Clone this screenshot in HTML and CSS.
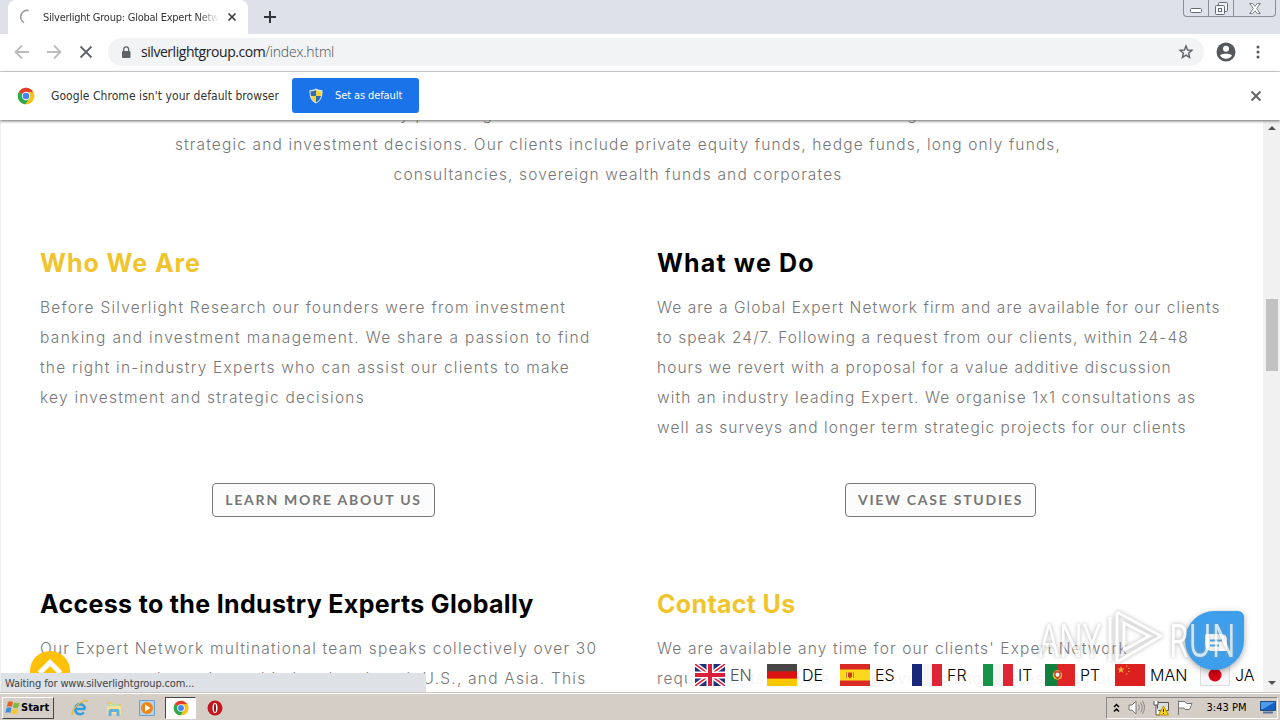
FILE: index.html
```html
<!DOCTYPE html>
<html lang="en">
<head>
    <meta charset="UTF-8">
    <title>Silverlight Group: Global Expert Network</title>
    <link rel="stylesheet" href="styles.css">
</head>
<body>
    <svg class="defs" width="0" height="0">
        <symbol id="chrome" viewBox="0 0 24 24">
            <circle cx="12" cy="12" r="11" fill="#fbc116"/>
            <path d="M12 12 2.5 6.5A11 11 0 0 1 21.5 6.5H12z" fill="#e33b2e"/>
            <path d="M2.5 6.5A11 11 0 0 0 11.5 23L16.8 14.5 12 12z" fill="#2da94f"/>
            <path d="M21.5 6.5A11 11 0 0 1 11.5 23L16.8 14.5 15 6.5z" fill="#fbc116"/>
            <circle cx="12" cy="12" r="5.6" fill="#fff"/>
            <circle cx="12" cy="12" r="4.4" fill="#4285f4"/>
        </symbol>
    </svg>

    <header class="tabstrip">
        <div class="tab">
            <svg class="spinner" width="16" height="16" viewBox="0 0 16 16"><path d="M9.500 1.500A6.500 6.500 0 0 0 5 13.500" fill="none" stroke="#999" stroke-width="1.600"/></svg>
            <span class="tab-title">Silverlight Group: Global Expert Network</span>
            <svg width="10" height="10" viewBox="0 0 10 10"><path d="M1.500 1.500l7 7M8.500 1.500l-7 7" stroke="#3c4043" stroke-width="1.700"/></svg>
        </div>
        <svg class="new-tab" width="14" height="14" viewBox="0 0 14 14"><path d="M7 1v12M1 7h12" stroke="#333639" stroke-width="2"/></svg>
        <div class="window-buttons">
            <span class="min"><svg width="12" height="5" viewBox="0 0 12 5"><rect x=".5" y=".5" width="11" height="4" rx="1" fill="#fff" stroke="#666b78"/></svg></span>
            <span class="restore"><svg width="13" height="13" viewBox="0 0 13 13" fill="#f3f4f6" stroke="#666b78"><rect x="3.500" y=".5" width="9" height="9" rx="1"/><rect x=".5" y="3.500" width="9" height="9" rx="1"/><rect x="3.500" y="6.500" width="3" height="3"/></svg></span>
            <span class="close"><svg width="12" height="11" viewBox="0 0 12 11"><path d="M.7.5h3L6 3.200 8.300.5h3L7.700 5.500l3.600 5h-3L6 7.800l-2.300 2.700h-3l3.600-5z" fill="#fff" stroke="#777c88"/></svg></span>
        </div>
    </header>

    <div class="toolbar">
        <svg class="back" width="16" height="16" viewBox="0 0 16 16"><path d="M15 8H2M8 1.500L1.500 8 8 14.500" fill="none" stroke="#babcbe" stroke-width="1.800"/></svg>
        <svg class="forward" width="16" height="16" viewBox="0 0 16 16"><path d="M1 8h13M8 1.500L14.500 8 8 14.500" fill="none" stroke="#babcbe" stroke-width="1.800"/></svg>
        <svg class="stop" width="14" height="14" viewBox="0 0 14 14"><path d="M1.500 1.500l11 11M12.500 1.500l-11 11" stroke="#5f6368" stroke-width="1.800"/></svg>
        <div class="omnibox">
            <svg width="10" height="13" viewBox="0 0 10 13"><rect x="1" y="5" width="8.500" height="7" rx="1" fill="#5f6368"/><path d="M2.800 5V3.300a2.400 2.400 0 0 1 4.800 0V5" fill="none" stroke="#5f6368" stroke-width="1.300"/></svg>
            <span class="url">silverlightgroup.com<span class="path">/index.html</span></span>
            <svg class="star" width="16" height="16" viewBox="0 0 16 16"><path d="M8 2l1.600 4 4.300.4-3.300 2.800 1 4.300L8 11.200l-3.600 2.300 1-4.300-3.300-2.800 4.300-.4z" fill="none" stroke="#5f6368" stroke-width="1.400"/></svg>
        </div>
        <svg class="profile" width="20" height="20" viewBox="0 0 20 20"><circle cx="10" cy="10" r="9.500" fill="#54585d"/><circle cx="10" cy="6.700" r="3" fill="#fff"/><path d="M4 13.600c1-2.600 11-2.600 12 0-2.800 4.300-9.200 4.300-12 0z" fill="#fff"/></svg>
        <svg class="dots" width="4" height="14" viewBox="0 0 4 14" fill="#54585d"><circle cx="2" cy="2" r="1.500"/><circle cx="2" cy="7" r="1.500"/><circle cx="2" cy="12" r="1.500"/></svg>
    </div>

    <div class="infobar">
        <svg width="18" height="18"><use href="#chrome"/></svg>
        <span class="info-text">Google Chrome isn't your default browser</span>
        <button class="default-btn">
            <svg width="14" height="16" viewBox="0 0 14 16"><path d="M7 .5c2 1.300 4 1.700 6.500 1.700C13.700 9 12 13 7 15.500 2 13 .3 9 .5 2.200 3 2.200 5 1.800 7 .5z" fill="#dfe7ee"/><path d="M7 2v6H2C1.600 6 1.600 5 1.600 3.300 4 3.200 5.500 3 7 2zM7 8h5c-.6 3-2 4.800-5 6.400z" fill="#2d6db5"/><path d="M7 2v6h5c.4-2 .4-3 .4-4.700C10 3.200 8.500 3 7 2zM7 8H2c.6 3 2 4.800 5 6.400z" fill="#f7d33b"/></svg>
            <span>Set as default</span>
        </button>
        <svg class="dismiss" width="12" height="12" viewBox="0 0 12 12"><path d="M1.500 1.500l9 9M10.500 1.500l-9 9" stroke="#63676c" stroke-width="2"/></svg>
    </div>

    <div class="viewport">
        <main class="page">
            <p class="intro">We assist our clients by providing them with access to the best leaders when making their critical<br>strategic and investment decisions. Our clients include private equity funds, hedge funds, long only funds,<br>consultancies, sovereign wealth funds and corporates</p>
            <div class="columns">
                <section class="who">
                    <h2 class="gold">Who We Are</h2>
                    <p>Before Silverlight Research our founders were from investment<br><span class="wide">banking and investment management. We share a passion to find</span><br>the right in-industry Experts who can assist our clients to make<br>key investment and strategic decisions</p>
                    <a class="btn">LEARN MORE ABOUT US</a>
                </section>
                <section class="what">
                    <h2>What we Do</h2>
                    <p>We are a Global Expert Network firm and are available for our clients<br>to speak 24/7. Following a request from our clients, within 24-48<br>hours we revert with a proposal for a value additive discussion<br><span class="wide">with an industry leading Expert. We organise 1x1 consultations as</span><br>well as surveys and longer term strategic projects for our clients</p>
                    <a class="btn">VIEW CASE STUDIES</a>
                </section>
                <section class="access">
                    <h2>Access to the Industry Experts Globally</h2>
                    <p>Our Expert Network multinational team speaks collectively over 30<br>languages and are situated in London, Israel, U.S., and Asia. This</p>
                </section>
                <section class="contact">
                    <h2 class="gold">Contact Us</h2>
                    <p>We are available any time for our clients' Expert Network<br>requirements and we can provide custom rates and hours</p>
                </section>
            </div>
        </main>
        <div class="scrollbar">
            <i class="arrow up"></i>
            <i class="thumb"></i>
            <i class="arrow down"></i>
        </div>

        <div class="to-top"><svg width="40" height="40" viewBox="0 0 40 40"><circle cx="20" cy="20" r="20" fill="#ffc107"/><path d="M9.500 22L20 11.500 30.500 22" fill="none" stroke="#fff" stroke-width="5"/></svg></div>
        <div class="status">Waiting for www.silverlightgroup.com...</div>

        <nav class="languages">
            <span class="lang current"><svg width="30" height="22" viewBox="0 0 30 22"><path d="M0 0h30v22H0z" fill="#22307b"/><path d="M0 0l30 22M30 0L0 22" stroke="#fff" stroke-width="4.500"/><path d="M0 0l30 22M30 0L0 22" stroke="#d8203a" stroke-width="1.500"/><path d="M15 0v22M0 11h30" stroke="#fff" stroke-width="7"/><path d="M15 0v22M0 11h30" stroke="#d8203a" stroke-width="4"/></svg>EN</span>
            <span class="lang"><svg width="30" height="22" viewBox="0 0 30 22"><path d="M0 0h30v8H0z" fill="#4a4545"/><path d="M0 7.300h30v8H0z" fill="#dd1313"/><path d="M0 14.600h30V22H0z" fill="#f8c800"/></svg>DE</span>
            <span class="lang"><svg width="30" height="22" viewBox="0 0 30 22"><path d="M0 0h30v22H0z" fill="#d92a24"/><path d="M0 5.500h30v11H0z" fill="#fcd91c"/><path d="M6.500 8v6M13.500 8v6" stroke="#c9832c"/><path d="M8 8.500h4v4l-2 2-2-2z" fill="#c8401e"/></svg>ES</span>
            <span class="lang"><svg width="30" height="22" viewBox="0 0 30 22"><path d="M0 0h10v22H0z" fill="#182779"/><path d="M10 0h10v22H10z" fill="#f5f5f5"/><path d="M20 0h10v22H20z" fill="#df2535"/></svg>FR</span>
            <span class="lang"><svg width="30" height="22" viewBox="0 0 30 22"><path d="M0 0h10v22H0z" fill="#179349"/><path d="M10 0h10v22H10z" fill="#f5f5f5"/><path d="M20 0h10v22H20z" fill="#df2535"/></svg>IT</span>
            <span class="lang"><svg width="30" height="22" viewBox="0 0 30 22"><path d="M0 0h12v22H0z" fill="#12803d"/><path d="M12 0h18v22H12z" fill="#df2525"/><circle cx="12.500" cy="11" r="4.700" fill="#e8c62c"/><path d="M10 8h5v4l-2.500 2.500L10 12z" fill="#fff" stroke="#c7292c" stroke-width="1.300"/></svg>PT</span>
            <span class="lang"><svg width="30" height="22" viewBox="0 0 30 22"><path d="M0 0h30v22H0z" fill="#dc2020"/><path d="M6 2l1 2.500 2.700.1-2.100 1.700.8 2.600L6 7.400 3.600 8.900l.8-2.600-2.100-1.700L5 4.500z" fill="#f2a33b"/><path d="M11 2h1.500M13 4.500h1.500M13 7.500h1.500M11 10h1.500" stroke="#f2a33b"/></svg>MAN</span>
            <span class="lang"><svg width="30" height="22" viewBox="0 0 30 22"><path d="M.5.5h29v21H.5z" fill="#f6f6f6" stroke="#ddd"/><circle cx="15" cy="11" r="6.500" fill="#d80014"/></svg>JA</span>
        </nav>

        <div class="chat"><svg width="59" height="60" viewBox="0 0 59 60"><path d="M29.500 0H53a6 6 0 0 1 6 6v23.500A29.500 29.500 0 1 1 29.500 0z" fill="#3d9eec"/><path d="M22 23h14q6 0 6 6v11H28q-8 0-8-6v-9q0-2 2-2z" fill="#fff"/><path d="M25 29.500h12M25 34.500h9" stroke="#3d9eec" stroke-width="2"/></svg></div>

        <div class="watermark">
            <span>ANY</span>
            <svg width="56" height="60" viewBox="0 0 56 60" fill="none" stroke="#fff" stroke-width="3"><path d="M3 8v44M10 3v50M10 3l44 24-44 26M17 14v27l25-14z"/></svg>
            <span>RUN</span>
        </div>
    </div>

    <footer class="taskbar">
        <div class="start">
            <svg width="16" height="16" viewBox="0 0 16 16"><path d="M3 2q2.500-1.500 5 0L6.800 7q-2.500-1.500-5 0z" fill="#e5602b"/><path d="M9 2.500q2.500 1.400 5.500 0L13.300 7.500q-2.500 1.400-5.400 0z" fill="#7eb83c"/><path d="M1.500 8q2.500-1.500 5 0L5.300 13q-2.500-1.500-5 0z" fill="#3f8ed8"/><path d="M7.600 8.500q2.500 1.400 5.400 0l-1.200 5q-2.500 1.400-5.400 0z" fill="#f6c63a"/></svg>
            Start
        </div>
        <div class="launch">
            <svg width="18" height="18" viewBox="0 0 18 18"><path d="M14.500 10H4.500M14 9.500a5 5 0 1 0-1.200 4" fill="none" stroke="#2f9fe0" stroke-width="2.600"/><path d="M1.500 16C-1 11 13-1 17 2.500" fill="none" stroke="#e9b936" stroke-width="1.300"/></svg>
            <svg width="18" height="18" viewBox="0 0 18 18"><path d="M2 3h5l1 2h8v10H2z" fill="#e9c766"/><path d="M3 5h11v3H3z" fill="#bfe0a4"/><path d="M2 7h14v8H2z" fill="#f7e19a"/><path d="M3.500 17v-5q0-2 2-2h7q2 0 2 2v5h-3v-4h-5v4z" fill="#62b3dc"/></svg>
            <svg width="16" height="16" viewBox="0 0 16 16"><path d="M.5.5h15v15H.5z" fill="#b4d4ee" stroke="#6d9fcd"/><circle cx="8" cy="8" r="6" fill="#f08515"/><path d="M6 4.500v7L11.500 8z" fill="#fff"/></svg>
            <span class="active-app"><svg width="16" height="16"><use href="#chrome"/></svg></span>
            <svg width="16" height="16" viewBox="0 0 16 16"><circle cx="8" cy="8" r="7.500" fill="#c4161c"/><ellipse cx="8" cy="8" rx="2.500" ry="5" fill="#fff"/><ellipse cx="8" cy="8" rx="1" ry="4.300" fill="#8c0d12"/></svg>
        </div>
        <div class="tray">
            <svg width="7" height="10" viewBox="0 0 7 10"><path d="M1 4l2.500-2.500L6 4M1 8.500L3.500 6 6 8.500" fill="none" stroke="#000" stroke-width="1.500"/></svg>
            <svg width="17" height="15" viewBox="0 0 17 15"><path d="M1 5h3l4-4v13l-4-4H1z" fill="#fff" stroke="#777"/><path d="M10.500 4.500q2 3 0 6M12.500 2.500q3.500 5 0 10M14.500 1q4 6.500 0 13" fill="none" stroke="#888"/></svg>
            <svg width="16" height="16" viewBox="0 0 16 16"><path d="M4.500 2.500h11v8h-11z" fill="#ddd" stroke="#555"/><path d="M1 1v4h4V1M3 5v10h4" fill="#fff" stroke="#555"/><path d="M10.500 6L15.500 15h-10z" fill="#fbd818" stroke="#b79300"/><path d="M10.500 9v3M10.500 13v1" stroke="#222"/></svg>
            <svg width="16" height="15" viewBox="0 0 16 15"><path d="M1.500.5V15M2 1.500h6l1.500 2H15l-2.500 6H8l-1-1.500H2" fill="#fff" stroke="#777"/></svg>
            <span class="clock">3:43 PM</span>
            <svg width="16" height="13" viewBox="0 0 16 13"><path d="M.5.5h15v9H.5z" fill="#1761c4" stroke="#244a80"/><path d="M1 1h14L3 8H1z" fill="#4d9bed"/><path d="M3 11.500h10" stroke="#54749c" stroke-width="2"/></svg>
        </div>
    </footer>
</body>
</html>
```
FILE: styles.css
```css
* {
    box-sizing: border-box;
}

body {
    margin: 0;
    width: 1280px;
    height: 720px;
    overflow: hidden;
    display: flex;
    flex-direction: column;
    background: #fff;
    font-family: "DejaVu Sans Condensed", "DejaVu Sans", sans-serif;
    font-size: 11px;
    color: #333;
}

svg {
    display: block;
    flex: none;
}

.defs {
    position: absolute;
}

/* browser frame */
.tabstrip {
    height: 34px;
    flex: none;
    display: flex;
    align-items: flex-start;
    background: #dee1e9;
    padding-left: 8px;
}

.tab {
    width: 240px;
    height: 34px;
    display: flex;
    align-items: center;
    padding: 0 11px;
    background: #fff;
    border-radius: 8px 8px 0 0;
}

.tab-title {
    width: 176px;
    margin: 0 8px 0 8px;
    overflow: hidden;
    white-space: nowrap;
    letter-spacing: -0.25px;
    -webkit-mask-image: linear-gradient(90deg, #000 88%, transparent);
}

.new-tab {
    margin: 10px 0 0 15px;
}

.window-buttons {
    margin: 0 4px 0 auto;
    display: flex;
    height: 17px;
    border: 1px solid #8b8f99;
    border-top: 0;
    border-radius: 0 0 4px 4px;
}

.window-buttons span {
    display: flex;
    align-items: center;
    justify-content: center;
}

.window-buttons .min {
    width: 24px;
    padding-top: 4px;
}

.window-buttons .restore {
    width: 26px;
    border: solid #8b8f99;
    border-width: 0 1px;
}

.window-buttons .close {
    width: 41px;
}

.toolbar {
    height: 38px;
    flex: none;
    display: flex;
    align-items: center;
    padding: 0 20px 1px 14px;
    border-bottom: 1px solid #d5d7da;
}

.forward {
    margin-left: 16px;
}

.stop {
    margin-left: 17px;
}

.omnibox {
    width: 1096px;
    height: 28px;
    margin-left: 15px;
    padding: 0 10px 0 13px;
    display: flex;
    align-items: center;
    border-radius: 14px;
    background: #f1f3f4;
}

.url {
    margin-left: 10px;
    padding-bottom: 1px;
    font-family: "Open Sans", sans-serif;
    font-size: 14px;
    letter-spacing: -0.45px;
    color: #202124;
}

.path {
    font-weight: 300;
    color: #4b4f54;
    letter-spacing: -0.2px;
}

.star {
    margin-left: auto;
}

.profile {
    margin-left: 12px;
}

.dots {
    margin-left: 20px;
}

.infobar {
    height: 48px;
    flex: none;
    display: flex;
    align-items: center;
    padding: 0 18px 1px 17px;
    background: #fff;
    position: relative;
    z-index: 2;
    box-shadow: 0 1px 3px #666;
}

.info-text {
    width: 228px;
    margin: 0 13px 0 16px;
    white-space: nowrap;
    font-size: 12px;
    letter-spacing: 0.06px;
}

.default-btn {
    width: 127px;
    height: 35px;
    display: flex;
    align-items: center;
    gap: 12px;
    padding: 0 17px;
    border: 0;
    border-radius: 3px;
    background: #1a73e8;
    color: #fff;
    font: inherit;
    letter-spacing: -0.1px;
    white-space: nowrap;
}

.dismiss {
    margin-left: auto;
}

/* web page */
.viewport {
    height: 572px;
    flex: none;
    display: flex;
    position: relative;
    overflow: hidden;
    border-left: 1px solid #eee;
}

.page {
    flex: 1;
    margin-top: -20px;
    font-family: Inter, sans-serif;
    color: #777;
}

.page p {
    margin: 0;
    font-size: 15.5px;
    font-weight: 300;
    line-height: 30px;
    white-space: nowrap;
}

.page .intro {
    width: 1234px;
    text-align: center;
    letter-spacing: 1.14px;
}

.columns {
    display: grid;
    grid-template-columns: 567px 567px;
    grid-template-rows: 341px 341px;
    column-gap: 50px;
    padding: 57px 0 0 39px;
}

section {
    display: flex;
    flex-direction: column;
    align-items: flex-start;
}

h2 {
    margin: 0 0 14px;
    font-size: 25px;
    font-weight: 700;
    line-height: 32px;
    letter-spacing: 0.33px;
    color: #000;
}

.gold {
    color: #f0c42c;
}

section p {
    height: 150px;
}

.who h2 {
    letter-spacing: 0.95px;
}

.what h2 {
    letter-spacing: 1.15px;
}

.who p {
    letter-spacing: 1.22px;
}

.what p {
    letter-spacing: 1.05px;
}

.access p {
    letter-spacing: 1.22px;
}

.contact p {
    letter-spacing: 1.12px;
}

.who .wide {
    letter-spacing: 1.33px;
}

.what .wide {
    letter-spacing: 1.12px;
}

.btn {
    align-self: center;
    height: 34px;
    margin-top: 40px;
    padding: 0 12px;
    border: 1px solid #777;
    border-radius: 4px;
    background: #fcfcfc;
    color: #777;
    font-family: Lato, sans-serif;
    font-size: 14px;
    font-weight: 700;
    line-height: 32px;
    letter-spacing: 1.77px;
}

.scrollbar {
    width: 17px;
    display: flex;
    flex-direction: column;
    align-items: center;
    background: #f1f1f1;
}

.arrow {
    border: 4px solid transparent;
}

.up {
    margin-top: 2px;
    border-bottom-color: #505050;
}

.thumb {
    width: 12px;
    height: 72px;
    margin-top: 169px;
    background: #c1c1c1;
}

.down {
    margin-top: auto;
    margin-bottom: 3px;
    border-top-color: #505050;
}

/* floating items over the page */
.to-top {
    position: absolute;
    left: 29px;
    bottom: 1px;
}

.status {
    position: absolute;
    left: -1px;
    bottom: 0;
    width: 426px;
    height: 19px;
    padding-left: 5px;
    line-height: 21px;
    letter-spacing: -0.13px;
    border-radius: 0 4px 0 0;
    background: #dee1e6;
    color: #444;
}

.chat {
    position: absolute;
    left: 1184px;
    top: 491px;
    filter: drop-shadow(0 2px 3px rgba(0, 0, 0, 0.35));
}

.languages {
    position: absolute;
    left: 686px;
    bottom: 0;
    width: 576px;
    height: 30px;
    display: grid;
    grid-template-columns: 72px 73px 72px 71px 62px 70px 85px 60px;
    padding: 2px 0 0 8px;
    background: rgba(255, 255, 255, 0.9);
    color: #000;
    font-family: Inter, sans-serif;
    font-size: 16px;
    font-weight: 300;
}

.lang {
    height: 22px;
    display: flex;
    align-items: center;
    gap: 5px;
}

.current {
    color: #555;
}

.watermark {
    position: absolute;
    left: 1038px;
    top: 488px;
    display: flex;
    align-items: center;
    gap: 6px;
    color: #fff;
    font-family: "Open Sans", sans-serif;
    font-size: 46px;
    opacity: 0.75;
    filter: drop-shadow(0 0 2px #999);
}

.watermark span {
    width: 62px;
    transform: scaleX(0.69);
    transform-origin: left;
}

/* taskbar */
.taskbar {
    height: 28px;
    flex: none;
    display: flex;
    align-items: center;
    background: #d5cec6;
    border-top: 1px solid #c9c4bc;
    box-shadow: inset 0 1px #fff;
    padding: 2px 2px 0;
    color: #000;
}

.start {
    width: 52px;
    height: 22px;
    display: flex;
    align-items: center;
    padding-left: 2px;
    border: 1px solid;
    border-color: #fff #444 #444 #fff;
    font-weight: 700;
}

.launch {
    display: flex;
    align-items: center;
    margin-left: 17px;
    gap: 16px;
}

.active-app {
    width: 31px;
    height: 22px;
    margin: 0 -5px 0 -6px;
    display: flex;
    align-items: center;
    justify-content: center;
    border: 1px solid;
    border-color: #444 #fff #fff #444;
    background: #fff;
}

.tray {
    width: 172px;
    height: 22px;
    margin-left: auto;
    display: flex;
    align-items: center;
    gap: 8px;
    padding: 0 1px 0 6px;
    border: 1px solid;
    border-color: #888 #fff #fff #888;
}

.clock {
    margin: 0 auto;
    white-space: nowrap;
}
```
